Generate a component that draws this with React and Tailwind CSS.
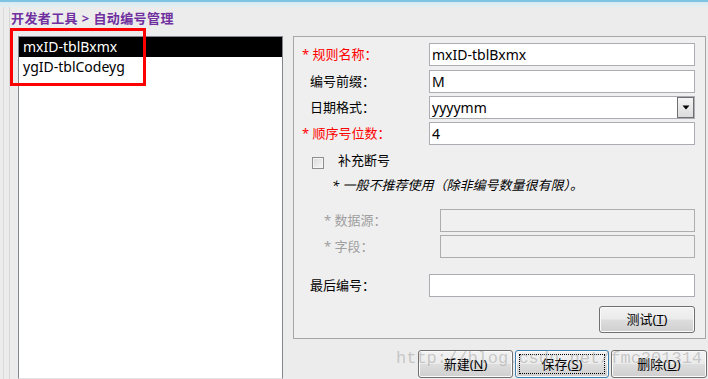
import React from "react";

const F = "font-['Noto_Sans','Noto_Sans_CJK_SC',sans-serif]";

function Btn({ children, className = "", focus = false, w = "w-[95px]", h = "h-[28px]" }) {
  return (
    <div
      className={`relative ${w} ${h} flex items-center justify-center rounded-[3px] border ${
        focus ? "border-[#3c7fb1]" : "border-[#707070]"
      } bg-[linear-gradient(to_bottom,#f3f3f3_0%,#ebebeb_48%,#dddddd_52%,#cfcfcf_100%)] shadow-[inset_0_0_0_1px_#fbfbfb] text-[13px] text-black ${className}`}
    >
      {focus && <span className="absolute inset-[3px] border border-dotted border-black" />}
      <span className="relative leading-none">{children}</span>
    </div>
  );
}

function Input({ value = "", w = "w-[266px]", disabled = false, children }) {
  return (
    <div
      className={`${w} h-[23px] flex items-center border ${
        disabled ? "bg-[#f0f0f0] border-[#adadad]" : "bg-white border-[#abadb3]"
      } pl-[2px] text-[14px] text-black relative`}
    >
      <span className="leading-none">{value}</span>
      {children}
    </div>
  );
}

export default function App() {
  return (
    <div className={`relative w-[708px] h-[379px] overflow-hidden bg-[#ececec] ${F}`}>
      {/* top bar */}
      <div className="h-[2px] bg-[#7fc3e2]" />
      <div className="h-[5px] bg-[linear-gradient(to_bottom,#d3ebf3,#e6eff0)]" />

      <div className="flex h-[372px]">
        {/* left column */}
        <div className="w-[293px] flex h-full shrink-0">
          <div className="w-[3px]" />
          <div className="w-[6px] border-l border-[#d9d9d9]" />
          <div className="flex-1 border-l border-[#d6d6d6] flex flex-col">
            <div className="h-[29px] pl-[1px] pt-[3px] text-[13px] font-bold text-[#7030a0] leading-[17px] tracking-[0.4px] whitespace-nowrap">
              开发者工具 &gt; 自动编号管理
            </div>
            <div className="ml-[8px] w-[265px] flex-1 border border-[#828790] border-b-[#e3e3e3] bg-white flex flex-col text-[14px]">
              <div className="h-[20px] bg-black text-white pl-[4px] flex items-center leading-none">mxID-tblBxmx</div>
              <div className="h-[20px] text-black pl-[4px] flex items-center leading-none">ygID-tblCodeyg</div>
            </div>
          </div>
        </div>

        {/* right column */}
        <div className="w-[414px] flex flex-col pt-[29px] shrink-0">
          <div className="w-[413px] h-[303px] border border-[#a6a6a6] bg-[#efefef] flex flex-col pt-[6px] text-[13px]">
            <div className="flex items-center h-[23px]">
              <div className="w-[135px] pl-[8px] text-[#ff0000]">* 规则名称：</div>
              <Input value="mxID-tblBxmx" />
            </div>
            <div className="flex items-center h-[23px] mt-[4px]">
              <div className="w-[135px] pl-[16px] text-black">编号前缀：</div>
              <Input value="M" />
            </div>
            <div className="flex items-center h-[23px] mt-[3px]">
              <div className="w-[135px] pl-[16px] text-black">日期格式：</div>
              <Input value="yyyymm">
                <div className="absolute right-[0px] top-[0px] bottom-[0px] w-[17px] border border-[#707070] bg-[linear-gradient(to_bottom,#f4f4f4,#dcdcdc)] flex items-center justify-center">
                  <svg width="8" height="5" viewBox="0 0 8 5">
                    <polygon points="0.5,0.5 7.5,0.5 4,4.5" fill="#000" />
                  </svg>
                </div>
              </Input>
            </div>
            <div className="flex items-center h-[23px] mt-[3px]">
              <div className="w-[135px] pl-[8px] text-[#ff0000]">* 顺序号位数：</div>
              <Input value="4" />
            </div>

            <div className="flex items-start h-[20px] mt-[5px] pl-[18px]">
              <div className="mt-[7px] w-[12px] h-[12px] border border-[#8f8f8f] bg-[linear-gradient(135deg,#d9d9d9,#f7f7f7)] shadow-[inset_0_0_0_1px_#f4f4f4]" />
              <div className="ml-[14px] leading-[20px] text-black">补充断号</div>
            </div>

            <div className="h-[20px] mt-[5px] pl-[38px] leading-[20px] italic text-black">
              * 一般不推荐使用（除非编号数量很有限）。
            </div>

            <div className="flex items-center h-[23px] mt-[14px]">
              <div className="w-[146px] pl-[30px] text-[#a0a0a0]">* 数据源：</div>
              <Input w="w-[255px]" disabled />
            </div>
            <div className="flex items-center h-[23px] mt-[3px]">
              <div className="w-[146px] pl-[30px] text-[#a0a0a0]">* 字段：</div>
              <Input w="w-[255px]" disabled />
            </div>

            <div className="flex items-center h-[23px] mt-[16px]">
              <div className="w-[135px] pl-[16px] text-black">最后编号：</div>
              <Input />
            </div>

            <div className="flex justify-start mt-[9px] pl-[305px]">
              <Btn w="w-[96px]" h="h-[27px]">
                测试(<span className="underline">T</span>)
              </Btn>
            </div>
          </div>

          <div className="flex justify-end gap-[2px] mt-[11px]">
            <Btn w="w-[95px]">
              新建(<span className="underline">N</span>)
            </Btn>
            <Btn w="w-[94px]" focus>
              保存(<span className="underline">S</span>)
            </Btn>
            <Btn w="w-[96px]">
              删除(<span className="underline">D</span>)
            </Btn>
          </div>
        </div>
      </div>

      {/* watermark */}
      <div className="pointer-events-none absolute left-[396px] top-[349px] font-['Liberation_Mono',monospace] text-[17px] leading-[20px] text-[rgba(150,150,150,0.45)] whitespace-nowrap">
        http://blog.csdn.net/fmc201314
      </div>

      {/* red annotation box */}
      <div className="pointer-events-none absolute left-[10px] top-[28px] w-[136px] h-[58px] border-[3px] border-[#ff0000]" />
    </div>
  );
}
